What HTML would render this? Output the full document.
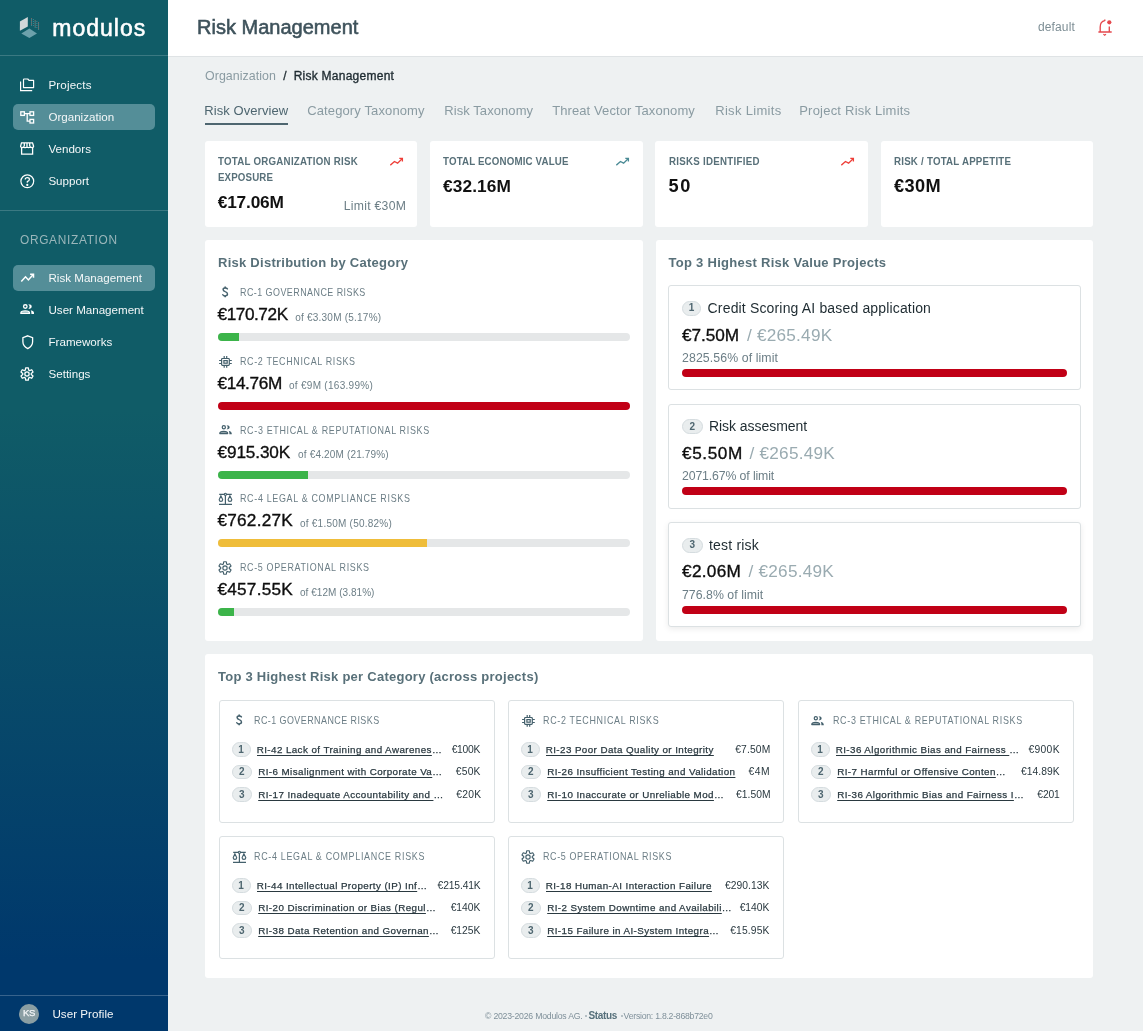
<!DOCTYPE html>
<html><head><meta charset="utf-8"><title>Risk Management</title>
<style>
html,body{margin:0;padding:0;width:1143px;height:1031px;overflow:hidden;background:#eef1f2}
body{position:relative;font-family:"Liberation Sans",sans-serif}
.t{position:absolute;white-space:nowrap}
</style></head><body>
<div style="position:absolute;left:0;top:0;width:1143px;height:1031px;will-change:transform;overflow:hidden">
<div style="position:absolute;left:0;top:0;width:168px;height:1031px;background:linear-gradient(180deg,#105c67 0px,#105c67 410px,#00386c 960px,#00386c 1031px)"></div>
<div style="position:absolute;left:0;top:55px;width:168px;height:1px;background:rgba(255,255,255,0.18)"></div>
<div style="position:absolute;left:0;top:210px;width:168px;height:1px;background:rgba(255,255,255,0.18)"></div>
<div style="position:absolute;left:0;top:995px;width:168px;height:1px;background:rgba(255,255,255,0.22)"></div>
<svg style="position:absolute;left:0;top:0" width="60" height="56" viewBox="0 0 60 56">
<polygon points="19.9,21.6 27.8,16.9 27.8,26.5 19.9,30.8" fill="#d3d8da"/>
<polygon points="21.3,33.5 29.4,28.6 37,33.5 29.4,37.9" fill="#6da1ab"/>
<circle cx="31.60" cy="18.60" r="0.5" fill="#a06e68"/>
<circle cx="31.60" cy="19.60" r="0.5" fill="#4f929b"/>
<circle cx="31.60" cy="20.60" r="0.5" fill="#a06e68"/>
<circle cx="31.60" cy="21.60" r="0.5" fill="#4f929b"/>
<circle cx="31.60" cy="22.60" r="0.5" fill="#a06e68"/>
<circle cx="31.60" cy="23.60" r="0.5" fill="#4f929b"/>
<circle cx="31.60" cy="24.60" r="0.5" fill="#a06e68"/>
<circle cx="31.60" cy="25.60" r="0.5" fill="#4f929b"/>
<circle cx="33.35" cy="19.60" r="0.5" fill="#4f929b"/>
<circle cx="33.35" cy="21.60" r="0.5" fill="#4f929b"/>
<circle cx="33.35" cy="23.60" r="0.5" fill="#4f929b"/>
<circle cx="33.35" cy="25.60" r="0.5" fill="#4f929b"/>
<circle cx="35.10" cy="20.60" r="0.5" fill="#a06e68"/>
<circle cx="35.10" cy="21.60" r="0.5" fill="#4f929b"/>
<circle cx="35.10" cy="22.60" r="0.5" fill="#a06e68"/>
<circle cx="35.10" cy="23.60" r="0.5" fill="#4f929b"/>
<circle cx="35.10" cy="24.60" r="0.5" fill="#a06e68"/>
<circle cx="35.10" cy="25.60" r="0.5" fill="#4f929b"/>
<circle cx="35.10" cy="26.60" r="0.5" fill="#a06e68"/>
<circle cx="35.10" cy="27.60" r="0.5" fill="#4f929b"/>
<circle cx="36.85" cy="21.60" r="0.5" fill="#4f929b"/>
<circle cx="36.85" cy="23.60" r="0.5" fill="#4f929b"/>
<circle cx="36.85" cy="25.60" r="0.5" fill="#4f929b"/>
<circle cx="36.85" cy="27.60" r="0.5" fill="#4f929b"/>
<circle cx="38.60" cy="22.60" r="0.5" fill="#a06e68"/>
<circle cx="38.60" cy="23.60" r="0.5" fill="#4f929b"/>
<circle cx="38.60" cy="24.60" r="0.5" fill="#a06e68"/>
<circle cx="38.60" cy="25.60" r="0.5" fill="#4f929b"/>
<circle cx="38.60" cy="26.60" r="0.5" fill="#a06e68"/>
<circle cx="38.60" cy="27.60" r="0.5" fill="#4f929b"/>
<circle cx="38.60" cy="28.60" r="0.5" fill="#a06e68"/>
<circle cx="38.60" cy="29.60" r="0.5" fill="#4f929b"/>
</svg>
<div style="position:absolute;left:13px;top:104px;width:142px;height:26px;border-radius:5px;background:#548e98"></div>
<div style="position:absolute;left:13px;top:265px;width:142px;height:26px;border-radius:5px;background:#548e98"></div>
<svg style="position:absolute;left:20px;top:77.5px" width="16" height="14" viewBox="0 0 16 14" fill="none" stroke="#ffffff" stroke-width="1.2">
<path d="M4.2 1 H7.8 L9 2.4 H13.6 V9.6 H3.5 V1.7 Q3.5 1 4.2 1 Z" stroke-linejoin="round"/><path d="M0.6 3.4 V12.6 H12.2"/></svg>
<svg style="position:absolute;left:20px;top:110.5px" width="15" height="13" viewBox="0 0 15 13" fill="none" stroke="#ffffff" stroke-width="1.3">
<rect x="0.8" y="0.8" width="3.6" height="3.6"/><rect x="10" y="0.8" width="3.6" height="3.6"/><rect x="10" y="8.4" width="3.6" height="3.6"/>
<path d="M4.4 2.6 H10 M7.2 2.6 V10.2 H10"/></svg>
<svg style="position:absolute;left:20px;top:141.7px" width="15" height="13" viewBox="0 0 15 13" fill="none" stroke="#ffffff" stroke-width="1.3">
<path d="M1.5 0.8 H12.5 L13.6 4.2 Q13.6 5.6 12 5.6 Q10.3 5.6 10.3 4.2 Q10.3 5.6 8.6 5.6 Q7 5.6 7 4.2 Q7 5.6 5.4 5.6 Q3.7 5.6 3.7 4.2 Q3.7 5.6 2.1 5.6 Q0.6 5.6 0.6 4.2 Z"/>
<path d="M1.6 5.6 V12.2 H12.6 V5.6 M4.3 1 V4.2 M7 1 V4.2 M9.7 1 V4.2"/></svg>
<svg style="position:absolute;left:20px;top:174px" width="15" height="15" viewBox="0 0 15 15" fill="none" stroke="#ffffff" stroke-width="1.2">
<circle cx="7.3" cy="7.3" r="6.4"/><path d="M5.2 5.6 Q5.2 3.6 7.3 3.6 Q9.4 3.6 9.4 5.4 Q9.4 6.6 7.3 7.6 V8.8"/><circle cx="7.3" cy="10.9" r="0.5" fill="#ffffff"/></svg>
<svg style="position:absolute;left:20px;top:273px" width="16" height="12" viewBox="0 0 16 12" fill="none" stroke="#ffffff" stroke-width="1.5" stroke-linejoin="miter" stroke-linecap="butt">
<path d="M1.3 8.4 L5.5 3.8 L8.4 7 L13.2 1.6"/><path d="M10.1 1.3 H13.5 V4.7"/></svg>
<svg style="position:absolute;left:20px;top:304px" width="15.0" height="11.0" viewBox="0 0 15 11">
<circle cx="5.3" cy="2.5" r="1.75" fill="none" stroke="#ffffff" stroke-width="1.35"/>
<path d="M8.3 0.2 A3.4 2.3 0 0 1 8.3 4.8 A4.2 3.4 0 0 0 8.3 0.2Z" fill="#ffffff"/>
<path d="M0.9 9.4 V9 Q0.9 6.9 5.2 6.9 Q9.5 6.9 9.5 9 V9.4 Z" fill="#ffffff" fill-opacity="0.55" stroke="#ffffff" stroke-width="1.35" stroke-linejoin="round"/>
<path d="M10.7 6.3 Q14 6.9 14 9 V10.1 H11.4 V9.2 Q11.4 7.5 10.7 6.3 Z" fill="#ffffff"/></svg>
<svg style="position:absolute;left:21.5px;top:334.5px" width="12" height="15" viewBox="0 0 12 15" fill="none" stroke="#ffffff" stroke-width="1.3">
<path d="M5.75 0.8 L10.6 2.6 V6.8 Q10.6 11.2 5.75 13.6 Q0.9 11.2 0.9 6.8 V2.6 Z"/></svg>
<svg style="position:absolute;left:20.3px;top:367px" width="14" height="14" viewBox="0 0 15 15" fill="none" stroke="#ffffff" stroke-width="1.39" stroke-linejoin="round">
<polygon points="6.09,0.85 8.91,0.85 9.28,3.26 10.28,3.84 12.55,2.95 13.97,5.40 12.06,6.92 12.06,8.08 13.97,9.60 12.55,12.05 10.28,11.16 9.28,11.74 8.91,14.15 6.09,14.15 5.72,11.74 4.72,11.16 2.45,12.05 1.03,9.60 2.94,8.08 2.94,6.92 1.03,5.40 2.45,2.95 4.72,3.84 5.72,3.26"/><circle cx="7.5" cy="7.5" r="2.3"/></svg>
<div style="position:absolute;left:19px;top:1004px;width:20px;height:20px;border-radius:50%;background:#8a9ea3"></div>
<div style="position:absolute;left:168px;top:0;width:975px;height:56px;background:#fff"></div>
<svg style="position:absolute;left:1097px;top:18px" width="17" height="19" viewBox="0 0 17 19" fill="none" stroke="#e5484d" stroke-width="1.35">
<path d="M1.4 14 H14.7 M3.2 14 V9 Q3.2 3.6 7.8 2.7 M12.3 8.6 V14 M7.8 1.5 V2.9"/><path d="M6.4 16.1 L7.7 17.3 L9 16.1" stroke-width="1.2"/><circle cx="12.3" cy="4.3" r="2.1" fill="#e5484d" stroke="none"/></svg>
<div style="position:absolute;left:168px;top:56px;width:975px;height:975px;background:#eef1f2"></div>
<div style="position:absolute;left:168px;top:56px;width:975px;height:1px;background:#dfe3e5"></div>
<div style="position:absolute;left:205px;top:123px;width:83px;height:2px;background:#4e6670"></div>
<div style="position:absolute;left:205px;top:141px;width:212px;height:86px;background:#fff;border-radius:3px"></div>
<div style="position:absolute;left:430px;top:141px;width:213px;height:86px;background:#fff;border-radius:3px"></div>
<div style="position:absolute;left:655px;top:141px;width:213px;height:86px;background:#fff;border-radius:3px"></div>
<div style="position:absolute;left:881px;top:141px;width:212px;height:86px;background:#fff;border-radius:3px"></div>
<svg style="position:absolute;left:390px;top:157px" width="16" height="12" viewBox="0 0 16 12" fill="none" stroke="#ee3e38" stroke-width="1.3" stroke-linejoin="miter" stroke-linecap="butt">
<path d="M0.3 8.2 L4.45 4.45 L7.6 6.1 L12.1 1.7"/><path d="M9.3 1.4 H12.4 V4.45"/></svg>
<svg style="position:absolute;left:615.5px;top:157px" width="16" height="12" viewBox="0 0 16 12" fill="none" stroke="#4a8a95" stroke-width="1.3" stroke-linejoin="miter" stroke-linecap="butt">
<path d="M0.3 8.2 L4.45 4.45 L7.6 6.1 L12.1 1.7"/><path d="M9.3 1.4 H12.4 V4.45"/></svg>
<svg style="position:absolute;left:840.5px;top:157px" width="16" height="12" viewBox="0 0 16 12" fill="none" stroke="#ee3e38" stroke-width="1.3" stroke-linejoin="miter" stroke-linecap="butt">
<path d="M0.3 8.2 L4.45 4.45 L7.6 6.1 L12.1 1.7"/><path d="M9.3 1.4 H12.4 V4.45"/></svg>
<div style="position:absolute;left:205px;top:240px;width:438px;height:401px;background:#fff;border-radius:3px"></div>
<div style="position:absolute;left:656px;top:240px;width:437px;height:401px;background:#fff;border-radius:3px"></div>
<div style="position:absolute;left:205px;top:654px;width:888px;height:324px;background:#fff;border-radius:3px"></div>
<div style="position:absolute;left:218px;top:333.0px;width:412px;height:8px;border-radius:4px;background:#e5e7e8;overflow:hidden"><div style="width:21.3px;height:8px;background:#3cb44a"></div></div>
<svg style="position:absolute;left:220.9px;top:286.4px" width="9" height="12" viewBox="0 0 9 12" fill="none" stroke="#44606c" stroke-width="1.45" stroke-linecap="round">
<path d="M6.4 2.9 Q5.9 1.9 4.1 1.9 Q2.1 1.9 2.1 3.6 Q2.1 5 4.2 5.6 Q6.5 6.2 6.5 8.1 Q6.5 9.9 4.1 9.9 Q2.4 9.9 1.8 8.7"/><path d="M4.2 0.6 V1.9 M4.2 9.9 V11.3" stroke-linecap="butt" stroke-width="1.6"/></svg>
<div style="position:absolute;left:218px;top:401.75px;width:412px;height:8px;border-radius:4px;background:#e5e7e8;overflow:hidden"><div style="width:412.0px;height:8px;background:#c10016"></div></div>
<svg style="position:absolute;left:219.0px;top:355.95px" width="13" height="12" viewBox="0 0 13 12" fill="none" stroke="#44606c" stroke-width="1.2">
<rect x="2.6" y="2.5" width="7.7" height="6.8" rx="0.8"/><rect x="4.9" y="4.6" width="3.3" height="2.6"/>
<path d="M5.2 0.1 V2.5 M7.7 0.1 V2.5 M5.2 9.3 V11.8 M7.7 9.3 V11.8 M0.1 4.5 H2.6 M0.1 7.5 H2.6 M10.3 4.5 H12.8 M10.3 7.5 H12.8"/></svg>
<div style="position:absolute;left:218px;top:470.5px;width:412px;height:8px;border-radius:4px;background:#e5e7e8;overflow:hidden"><div style="width:89.8px;height:8px;background:#3cb44a"></div></div>
<svg style="position:absolute;left:218.70000000000002px;top:425.2px" width="13.65" height="10.01" viewBox="0 0 15 11">
<circle cx="5.3" cy="2.5" r="1.75" fill="none" stroke="#44606c" stroke-width="1.35"/>
<path d="M8.3 0.2 A3.4 2.3 0 0 1 8.3 4.8 A4.2 3.4 0 0 0 8.3 0.2Z" fill="#44606c"/>
<path d="M0.9 9.4 V9 Q0.9 6.9 5.2 6.9 Q9.5 6.9 9.5 9 V9.4 Z" fill="#44606c" fill-opacity="0.55" stroke="#44606c" stroke-width="1.35" stroke-linejoin="round"/>
<path d="M10.7 6.3 Q14 6.9 14 9 V10.1 H11.4 V9.2 Q11.4 7.5 10.7 6.3 Z" fill="#44606c"/></svg>
<div style="position:absolute;left:218px;top:539.25px;width:412px;height:8px;border-radius:4px;background:#e5e7e8;overflow:hidden"><div style="width:209.4px;height:8px;background:#efbd3a"></div></div>
<svg style="position:absolute;left:218.0px;top:492.0px" width="15" height="14" viewBox="0 0 15 14" fill="none" stroke="#44606c" stroke-width="1.1">
<path d="M1.2 2.3 H6.3 M8.5 2.3 H13.8 M7.4 3.4 V12.4 M1 12.4 H14" stroke-width="1.2"/><circle cx="7.4" cy="2.3" r="1.1"/>
<path d="M2.9 3.8 L1.2 7.7 Q1.2 9.4 2.9 9.4 Q4.7 9.4 4.7 7.7 Z M11.9 3.8 L10.1 7.7 Q10.1 9.4 11.9 9.4 Q13.8 9.4 13.8 7.7 Z"/></svg>
<div style="position:absolute;left:218px;top:608.0px;width:412px;height:8px;border-radius:4px;background:#e5e7e8;overflow:hidden"><div style="width:15.7px;height:8px;background:#3cb44a"></div></div>
<svg style="position:absolute;left:218.45000000000002px;top:560.9px" width="14" height="14" viewBox="0 0 15 15" fill="none" stroke="#44606c" stroke-width="1.23" stroke-linejoin="round">
<polygon points="6.09,0.85 8.91,0.85 9.28,3.26 10.28,3.84 12.55,2.95 13.97,5.40 12.06,6.92 12.06,8.08 13.97,9.60 12.55,12.05 10.28,11.16 9.28,11.74 8.91,14.15 6.09,14.15 5.72,11.74 4.72,11.16 2.45,12.05 1.03,9.60 2.94,8.08 2.94,6.92 1.03,5.40 2.45,2.95 4.72,3.84 5.72,3.26"/><circle cx="7.5" cy="7.5" r="2.3"/></svg>
<div style="position:absolute;left:668px;top:285.3px;width:413px;height:105px;box-sizing:border-box;border:1px solid #dce1e3;border-radius:3px;background:#fff;"></div>
<div style="position:absolute;left:682px;top:301.1px;width:19px;height:14.8px;box-sizing:border-box;border:1px solid #d5dcdf;border-radius:8px;background:#e9edee"></div>
<div style="position:absolute;left:682px;top:369.0px;width:385px;height:8px;border-radius:4px;background:#c10016"></div>
<div style="position:absolute;left:668px;top:403.6px;width:413px;height:105px;box-sizing:border-box;border:1px solid #dce1e3;border-radius:3px;background:#fff;"></div>
<div style="position:absolute;left:682px;top:419.40000000000003px;width:20.6px;height:14.8px;box-sizing:border-box;border:1px solid #d5dcdf;border-radius:8px;background:#e9edee"></div>
<div style="position:absolute;left:682px;top:487.3px;width:385px;height:8px;border-radius:4px;background:#c10016"></div>
<div style="position:absolute;left:668px;top:522.1px;width:413px;height:105px;box-sizing:border-box;border:1px solid #dce1e3;border-radius:3px;background:#fff;box-shadow:0 2px 6px rgba(0,0,0,0.08);"></div>
<div style="position:absolute;left:682px;top:537.9px;width:20.6px;height:14.8px;box-sizing:border-box;border:1px solid #d5dcdf;border-radius:8px;background:#e9edee"></div>
<div style="position:absolute;left:682px;top:605.8000000000001px;width:385px;height:8px;border-radius:4px;background:#c10016"></div>
<div style="position:absolute;left:218.5px;top:699.5px;width:276px;height:123px;box-sizing:border-box;border:1px solid #dce1e3;border-radius:3px;background:#fff"></div>
<svg style="position:absolute;left:234.6px;top:714.1999999999999px" width="9" height="12" viewBox="0 0 9 12" fill="none" stroke="#44606c" stroke-width="1.45" stroke-linecap="round">
<path d="M6.4 2.9 Q5.9 1.9 4.1 1.9 Q2.1 1.9 2.1 3.6 Q2.1 5 4.2 5.6 Q6.5 6.2 6.5 8.1 Q6.5 9.9 4.1 9.9 Q2.4 9.9 1.8 8.7"/><path d="M4.2 0.6 V1.9 M4.2 9.9 V11.3" stroke-linecap="butt" stroke-width="1.6"/></svg>
<div style="position:absolute;left:231.5px;top:742.0px;width:19px;height:14.5px;box-sizing:border-box;border:1px solid #d5dcdf;border-radius:8px;background:#e9edee"></div>
<div class="lk" style="position:absolute;left:256.7px;top:743.6px;width:186.2px;height:14px;overflow:hidden;white-space:nowrap;text-overflow:ellipsis;font-size:9.8px;letter-spacing:0.42px;line-height:12px;color:#2a3940;-webkit-text-stroke:0.25px #2a3940;text-decoration:underline;text-underline-offset:1.5px">RI-42 Lack of Training and Awareness Program</div>
<div style="position:absolute;left:231.5px;top:764.5px;width:20.5px;height:14.5px;box-sizing:border-box;border:1px solid #d5dcdf;border-radius:8px;background:#e9edee"></div>
<div class="lk" style="position:absolute;left:258.2px;top:766.1px;width:184.7px;height:14px;overflow:hidden;white-space:nowrap;text-overflow:ellipsis;font-size:9.8px;letter-spacing:0.42px;line-height:12px;color:#2a3940;-webkit-text-stroke:0.25px #2a3940;text-decoration:underline;text-underline-offset:1.5px">RI-6 Misalignment with Corporate Values and Ethics</div>
<div style="position:absolute;left:231.5px;top:787.0px;width:20.5px;height:14.5px;box-sizing:border-box;border:1px solid #d5dcdf;border-radius:8px;background:#e9edee"></div>
<div class="lk" style="position:absolute;left:258.2px;top:788.6px;width:187.3px;height:14px;overflow:hidden;white-space:nowrap;text-overflow:ellipsis;font-size:9.8px;letter-spacing:0.42px;line-height:12px;color:#2a3940;-webkit-text-stroke:0.25px #2a3940;text-decoration:underline;text-underline-offset:1.5px">RI-17 Inadequate Accountability and Oversight</div>
<div style="position:absolute;left:507.5px;top:699.5px;width:276px;height:123px;box-sizing:border-box;border:1px solid #dce1e3;border-radius:3px;background:#fff"></div>
<svg style="position:absolute;left:521.7px;top:715.0px" width="13" height="12" viewBox="0 0 13 12" fill="none" stroke="#44606c" stroke-width="1.2">
<rect x="2.6" y="2.5" width="7.7" height="6.8" rx="0.8"/><rect x="4.9" y="4.6" width="3.3" height="2.6"/>
<path d="M5.2 0.1 V2.5 M7.7 0.1 V2.5 M5.2 9.3 V11.8 M7.7 9.3 V11.8 M0.1 4.5 H2.6 M0.1 7.5 H2.6 M10.3 4.5 H12.8 M10.3 7.5 H12.8"/></svg>
<div style="position:absolute;left:520.5px;top:742.0px;width:19px;height:14.5px;box-sizing:border-box;border:1px solid #d5dcdf;border-radius:8px;background:#e9edee"></div>
<div class="lk" style="position:absolute;left:545.7px;top:743.6px;width:172px;height:14px;overflow:hidden;white-space:nowrap;text-overflow:ellipsis;font-size:9.8px;letter-spacing:0.42px;line-height:12px;color:#2a3940;-webkit-text-stroke:0.25px #2a3940;text-decoration:underline;text-underline-offset:1.5px">RI-23 Poor Data Quality or Integrity</div>
<div style="position:absolute;left:520.5px;top:764.5px;width:20.5px;height:14.5px;box-sizing:border-box;border:1px solid #d5dcdf;border-radius:8px;background:#e9edee"></div>
<div class="lk" style="position:absolute;left:547.2px;top:766.1px;width:195px;height:14px;overflow:hidden;white-space:nowrap;text-overflow:ellipsis;font-size:9.8px;letter-spacing:0.42px;line-height:12px;color:#2a3940;-webkit-text-stroke:0.25px #2a3940;text-decoration:underline;text-underline-offset:1.5px">RI-26 Insufficient Testing and Validation</div>
<div style="position:absolute;left:520.5px;top:787.0px;width:20.5px;height:14.5px;box-sizing:border-box;border:1px solid #d5dcdf;border-radius:8px;background:#e9edee"></div>
<div class="lk" style="position:absolute;left:547.2px;top:788.6px;width:179.9px;height:14px;overflow:hidden;white-space:nowrap;text-overflow:ellipsis;font-size:9.8px;letter-spacing:0.42px;line-height:12px;color:#2a3940;-webkit-text-stroke:0.25px #2a3940;text-decoration:underline;text-underline-offset:1.5px">RI-10 Inaccurate or Unreliable Model Outputs</div>
<div style="position:absolute;left:797.5px;top:699.5px;width:276px;height:123px;box-sizing:border-box;border:1px solid #dce1e3;border-radius:3px;background:#fff"></div>
<svg style="position:absolute;left:811.4px;top:715.5px" width="13.65" height="10.01" viewBox="0 0 15 11">
<circle cx="5.3" cy="2.5" r="1.75" fill="none" stroke="#44606c" stroke-width="1.35"/>
<path d="M8.3 0.2 A3.4 2.3 0 0 1 8.3 4.8 A4.2 3.4 0 0 0 8.3 0.2Z" fill="#44606c"/>
<path d="M0.9 9.4 V9 Q0.9 6.9 5.2 6.9 Q9.5 6.9 9.5 9 V9.4 Z" fill="#44606c" fill-opacity="0.55" stroke="#44606c" stroke-width="1.35" stroke-linejoin="round"/>
<path d="M10.7 6.3 Q14 6.9 14 9 V10.1 H11.4 V9.2 Q11.4 7.5 10.7 6.3 Z" fill="#44606c"/></svg>
<div style="position:absolute;left:810.5px;top:742.0px;width:19px;height:14.5px;box-sizing:border-box;border:1px solid #d5dcdf;border-radius:8px;background:#e9edee"></div>
<div class="lk" style="position:absolute;left:835.7px;top:743.6px;width:184.2px;height:14px;overflow:hidden;white-space:nowrap;text-overflow:ellipsis;font-size:9.8px;letter-spacing:0.42px;line-height:12px;color:#2a3940;-webkit-text-stroke:0.25px #2a3940;text-decoration:underline;text-underline-offset:1.5px">RI-36 Algorithmic Bias and Fairness Issues</div>
<div style="position:absolute;left:810.5px;top:764.5px;width:20.5px;height:14.5px;box-sizing:border-box;border:1px solid #d5dcdf;border-radius:8px;background:#e9edee"></div>
<div class="lk" style="position:absolute;left:837.2px;top:766.1px;width:171.1px;height:14px;overflow:hidden;white-space:nowrap;text-overflow:ellipsis;font-size:9.8px;letter-spacing:0.42px;line-height:12px;color:#2a3940;-webkit-text-stroke:0.25px #2a3940;text-decoration:underline;text-underline-offset:1.5px">RI-7 Harmful or Offensive Content Generation</div>
<div style="position:absolute;left:810.5px;top:787.0px;width:20.5px;height:14.5px;box-sizing:border-box;border:1px solid #d5dcdf;border-radius:8px;background:#e9edee"></div>
<div class="lk" style="position:absolute;left:837.2px;top:788.6px;width:188.3px;height:14px;overflow:hidden;white-space:nowrap;text-overflow:ellipsis;font-size:9.8px;letter-spacing:0.42px;line-height:12px;color:#2a3940;-webkit-text-stroke:0.25px #2a3940;text-decoration:underline;text-underline-offset:1.5px">RI-36 Algorithmic Bias and Fairness Issues</div>
<div style="position:absolute;left:218.5px;top:835.7px;width:276px;height:123px;box-sizing:border-box;border:1px solid #dce1e3;border-radius:3px;background:#fff"></div>
<svg style="position:absolute;left:231.7px;top:849.75px" width="15" height="14" viewBox="0 0 15 14" fill="none" stroke="#44606c" stroke-width="1.1">
<path d="M1.2 2.3 H6.3 M8.5 2.3 H13.8 M7.4 3.4 V12.4 M1 12.4 H14" stroke-width="1.2"/><circle cx="7.4" cy="2.3" r="1.1"/>
<path d="M2.9 3.8 L1.2 7.7 Q1.2 9.4 2.9 9.4 Q4.7 9.4 4.7 7.7 Z M11.9 3.8 L10.1 7.7 Q10.1 9.4 11.9 9.4 Q13.8 9.4 13.8 7.7 Z"/></svg>
<div style="position:absolute;left:231.5px;top:878.2px;width:19px;height:14.5px;box-sizing:border-box;border:1px solid #d5dcdf;border-radius:8px;background:#e9edee"></div>
<div class="lk" style="position:absolute;left:256.7px;top:879.8000000000001px;width:172.7px;height:14px;overflow:hidden;white-space:nowrap;text-overflow:ellipsis;font-size:9.8px;letter-spacing:0.42px;line-height:12px;color:#2a3940;-webkit-text-stroke:0.25px #2a3940;text-decoration:underline;text-underline-offset:1.5px">RI-44 Intellectual Property (IP) Infringement</div>
<div style="position:absolute;left:231.5px;top:900.7px;width:20.5px;height:14.5px;box-sizing:border-box;border:1px solid #d5dcdf;border-radius:8px;background:#e9edee"></div>
<div class="lk" style="position:absolute;left:258.2px;top:902.3000000000001px;width:182.7px;height:14px;overflow:hidden;white-space:nowrap;text-overflow:ellipsis;font-size:9.8px;letter-spacing:0.42px;line-height:12px;color:#2a3940;-webkit-text-stroke:0.25px #2a3940;text-decoration:underline;text-underline-offset:1.5px">RI-20 Discrimination or Bias (Regulatory)</div>
<div style="position:absolute;left:231.5px;top:923.2px;width:20.5px;height:14.5px;box-sizing:border-box;border:1px solid #d5dcdf;border-radius:8px;background:#e9edee"></div>
<div class="lk" style="position:absolute;left:258.2px;top:924.8000000000001px;width:180.6px;height:14px;overflow:hidden;white-space:nowrap;text-overflow:ellipsis;font-size:9.8px;letter-spacing:0.42px;line-height:12px;color:#2a3940;-webkit-text-stroke:0.25px #2a3940;text-decoration:underline;text-underline-offset:1.5px">RI-38 Data Retention and Governance</div>
<div style="position:absolute;left:507.5px;top:835.7px;width:276px;height:123px;box-sizing:border-box;border:1px solid #dce1e3;border-radius:3px;background:#fff"></div>
<svg style="position:absolute;left:521.15px;top:849.9px" width="14" height="14" viewBox="0 0 15 15" fill="none" stroke="#44606c" stroke-width="1.23" stroke-linejoin="round">
<polygon points="6.09,0.85 8.91,0.85 9.28,3.26 10.28,3.84 12.55,2.95 13.97,5.40 12.06,6.92 12.06,8.08 13.97,9.60 12.55,12.05 10.28,11.16 9.28,11.74 8.91,14.15 6.09,14.15 5.72,11.74 4.72,11.16 2.45,12.05 1.03,9.60 2.94,8.08 2.94,6.92 1.03,5.40 2.45,2.95 4.72,3.84 5.72,3.26"/><circle cx="7.5" cy="7.5" r="2.3"/></svg>
<div style="position:absolute;left:520.5px;top:878.2px;width:19px;height:14.5px;box-sizing:border-box;border:1px solid #d5dcdf;border-radius:8px;background:#e9edee"></div>
<div class="lk" style="position:absolute;left:545.7px;top:879.8000000000001px;width:168px;height:14px;overflow:hidden;white-space:nowrap;text-overflow:ellipsis;font-size:9.8px;letter-spacing:0.42px;line-height:12px;color:#2a3940;-webkit-text-stroke:0.25px #2a3940;text-decoration:underline;text-underline-offset:1.5px">RI-18 Human-AI Interaction Failure</div>
<div style="position:absolute;left:520.5px;top:900.7px;width:20.5px;height:14.5px;box-sizing:border-box;border:1px solid #d5dcdf;border-radius:8px;background:#e9edee"></div>
<div class="lk" style="position:absolute;left:547.2px;top:902.3000000000001px;width:185.9px;height:14px;overflow:hidden;white-space:nowrap;text-overflow:ellipsis;font-size:9.8px;letter-spacing:0.42px;line-height:12px;color:#2a3940;-webkit-text-stroke:0.25px #2a3940;text-decoration:underline;text-underline-offset:1.5px">RI-2 System Downtime and Availability Issues</div>
<div style="position:absolute;left:520.5px;top:923.2px;width:20.5px;height:14.5px;box-sizing:border-box;border:1px solid #d5dcdf;border-radius:8px;background:#e9edee"></div>
<div class="lk" style="position:absolute;left:547.2px;top:924.8000000000001px;width:173.3px;height:14px;overflow:hidden;white-space:nowrap;text-overflow:ellipsis;font-size:9.8px;letter-spacing:0.42px;line-height:12px;color:#2a3940;-webkit-text-stroke:0.25px #2a3940;text-decoration:underline;text-underline-offset:1.5px">RI-15 Failure in AI-System Integration</div>
<div style="position:absolute;left:585px;top:1015px;width:2px;height:2px;background:#b5c0c5"></div>
<div style="position:absolute;left:620.5px;top:1015px;width:2px;height:2px;background:#b5c0c5"></div>
<div class="t" id="t0" style="left:52.30px;top:14.70px;font-size:23px;line-height:26px;font-weight:400;color:#ffffff;letter-spacing:1.000px;-webkit-text-stroke:0.55px #ffffff">modulos</div>
<div class="t" id="t1" style="left:48.40px;top:78.00px;font-size:11.6px;line-height:13px;font-weight:400;color:#f4f7f8;letter-spacing:0.165px;">Projects</div>
<div class="t" id="t2" style="left:48.40px;top:110.00px;font-size:11.6px;line-height:13px;font-weight:400;color:#f4f7f8;letter-spacing:0.000px;">Organization</div>
<div class="t" id="t3" style="left:48.40px;top:142.00px;font-size:11.6px;line-height:13px;font-weight:400;color:#f4f7f8;letter-spacing:0.000px;">Vendors</div>
<div class="t" id="t4" style="left:48.40px;top:174.00px;font-size:11.6px;line-height:13px;font-weight:400;color:#f4f7f8;letter-spacing:0.000px;">Support</div>
<div class="t" id="t5" style="left:20.00px;top:232.00px;font-size:13.2px;line-height:15px;font-weight:400;color:#9ab6ba;letter-spacing:0.770px;transform:scaleX(0.9);transform-origin:0 0">ORGANIZATION</div>
<div class="t" id="t6" style="left:48.50px;top:271.00px;font-size:11.6px;line-height:13px;font-weight:400;color:#f4f7f8;letter-spacing:-0.000px;">Risk Management</div>
<div class="t" id="t7" style="left:48.50px;top:303.00px;font-size:11.6px;line-height:13px;font-weight:400;color:#f4f7f8;letter-spacing:-0.010px;">User Management</div>
<div class="t" id="t8" style="left:48.50px;top:335.00px;font-size:11.6px;line-height:13px;font-weight:400;color:#f4f7f8;letter-spacing:0.000px;">Frameworks</div>
<div class="t" id="t9" style="left:48.50px;top:367.00px;font-size:11.6px;line-height:13px;font-weight:400;color:#f4f7f8;letter-spacing:0.000px;">Settings</div>
<div class="t" id="t10" style="left:23.00px;top:1007.00px;font-size:9.5px;line-height:11px;font-weight:400;color:#f4f6f7;letter-spacing:-0.400px;-webkit-text-stroke:0.25px #f4f6f7">KS</div>
<div class="t" id="t11" style="left:52.40px;top:1006.70px;font-size:11.6px;line-height:13px;font-weight:400;color:#f4f7f8;letter-spacing:0.048px;">User Profile</div>
<div class="t" id="t12" style="left:197.00px;top:15.60px;font-size:20px;line-height:22px;font-weight:400;color:#3e525b;letter-spacing:0.010px;-webkit-text-stroke:0.55px #3e525b">Risk Management</div>
<div class="t" id="t13" style="left:1038.00px;top:19.80px;font-size:12px;line-height:14px;font-weight:400;color:#7d8e95;letter-spacing:0.127px;">default</div>
<div class="t" id="t14" style="left:205.00px;top:69.00px;font-size:12.4px;line-height:14px;font-weight:400;color:#8a9ba2;letter-spacing:0.064px;">Organization</div>
<div class="t" id="t15" style="left:283.30px;top:69.00px;font-size:12px;line-height:14px;font-weight:400;color:#1e2b31;letter-spacing:0.000px;-webkit-text-stroke:0.3px #1e2b31">/</div>
<div class="t" id="t16" style="left:293.70px;top:69.00px;font-size:12px;line-height:14px;font-weight:400;color:#1e2b31;letter-spacing:0.249px;-webkit-text-stroke:0.35px #1e2b31">Risk Management</div>
<div class="t" id="t17" style="left:204.20px;top:103.00px;font-size:13px;line-height:15px;font-weight:400;color:#4e6670;letter-spacing:0.083px;">Risk Overview</div>
<div class="t" id="t18" style="left:307.20px;top:103.00px;font-size:13px;line-height:15px;font-weight:400;color:#8a9ba2;letter-spacing:0.124px;">Category Taxonomy</div>
<div class="t" id="t19" style="left:444.20px;top:103.00px;font-size:13px;line-height:15px;font-weight:400;color:#8a9ba2;letter-spacing:0.083px;">Risk Taxonomy</div>
<div class="t" id="t20" style="left:552.20px;top:103.00px;font-size:13px;line-height:15px;font-weight:400;color:#8a9ba2;letter-spacing:0.095px;">Threat Vector Taxonomy</div>
<div class="t" id="t21" style="left:715.20px;top:103.00px;font-size:13px;line-height:15px;font-weight:400;color:#8a9ba2;letter-spacing:0.320px;">Risk Limits</div>
<div class="t" id="t22" style="left:799.20px;top:103.00px;font-size:13px;line-height:15px;font-weight:400;color:#8a9ba2;letter-spacing:0.222px;">Project Risk Limits</div>
<div class="t" id="t23" style="left:217.70px;top:155.40px;font-size:10.8px;line-height:12px;font-weight:700;color:#587079;letter-spacing:0.273px;transform:scaleX(0.9);transform-origin:0 0">TOTAL ORGANIZATION RISK</div>
<div class="t" id="t24" style="left:217.70px;top:171.20px;font-size:10.8px;line-height:12px;font-weight:700;color:#587079;letter-spacing:0.143px;transform:scaleX(0.9);transform-origin:0 0">EXPOSURE</div>
<div class="t" id="t25" style="left:217.70px;top:191.90px;font-size:17.3px;line-height:20px;font-weight:700;color:#111;letter-spacing:-0.167px;">€17.06M</div>
<div class="t" id="t26" style="left:343.70px;top:199.00px;font-size:12.2px;line-height:14px;font-weight:400;color:#6c7e86;letter-spacing:0.283px;">Limit €30M</div>
<div class="t" id="t27" style="left:443.00px;top:155.40px;font-size:10.8px;line-height:12px;font-weight:700;color:#587079;letter-spacing:0.177px;transform:scaleX(0.9);transform-origin:0 0">TOTAL ECONOMIC VALUE</div>
<div class="t" id="t28" style="left:443.00px;top:175.70px;font-size:17.3px;line-height:20px;font-weight:700;color:#111;letter-spacing:0.098px;">€32.16M</div>
<div class="t" id="t29" style="left:668.50px;top:155.40px;font-size:10.8px;line-height:12px;font-weight:700;color:#587079;letter-spacing:0.305px;transform:scaleX(0.9);transform-origin:0 0">RISKS IDENTIFIED</div>
<div class="t" id="t30" style="left:668.50px;top:175.70px;font-size:18.2px;line-height:20px;font-weight:700;color:#111;letter-spacing:1.600px;">50</div>
<div class="t" id="t31" style="left:893.90px;top:155.40px;font-size:10.8px;line-height:12px;font-weight:700;color:#587079;letter-spacing:0.250px;transform:scaleX(0.9);transform-origin:0 0">RISK / TOTAL APPETITE</div>
<div class="t" id="t32" style="left:893.90px;top:175.70px;font-size:18.2px;line-height:20px;font-weight:700;color:#111;letter-spacing:0.404px;">€30M</div>
<div class="t" id="t33" style="left:218.00px;top:255.20px;font-size:13px;line-height:15px;font-weight:700;color:#587079;letter-spacing:0.260px;">Risk Distribution by Category</div>
<div class="t" id="t34" style="left:668.50px;top:255.20px;font-size:13px;line-height:15px;font-weight:700;color:#587079;letter-spacing:0.281px;">Top 3 Highest Risk Value Projects</div>
<div class="t" id="t35" style="left:218.00px;top:669.10px;font-size:13px;line-height:15px;font-weight:700;color:#587079;letter-spacing:0.250px;">Top 3 Highest Risk per Category (across projects)</div>
<div class="t" id="t36" style="left:240.30px;top:287.00px;font-size:10.4px;line-height:11px;font-weight:400;color:#6c7e86;letter-spacing:0.530px;transform:scaleX(0.86);transform-origin:0 0">RC-1 GOVERNANCE RISKS</div>
<div class="t" id="t37" style="left:217.50px;top:304.10px;font-size:17.2px;line-height:20px;font-weight:400;color:#0e0e0e;letter-spacing:-0.429px;-webkit-text-stroke:0.35px #0e0e0e">€170.72K</div>
<div class="t" id="t38" style="left:295.20px;top:311.60px;font-size:10px;line-height:11px;font-weight:400;color:#6c7e86;letter-spacing:0.227px;">of €3.30M (5.17%)</div>
<div class="t" id="t39" style="left:240.30px;top:355.75px;font-size:10.4px;line-height:11px;font-weight:400;color:#6c7e86;letter-spacing:0.752px;transform:scaleX(0.86);transform-origin:0 0">RC-2 TECHNICAL RISKS</div>
<div class="t" id="t40" style="left:217.50px;top:372.85px;font-size:17.2px;line-height:20px;font-weight:400;color:#0e0e0e;letter-spacing:-0.363px;-webkit-text-stroke:0.35px #0e0e0e">€14.76M</div>
<div class="t" id="t41" style="left:289.00px;top:380.35px;font-size:10px;line-height:11px;font-weight:400;color:#6c7e86;letter-spacing:0.286px;">of €9M (163.99%)</div>
<div class="t" id="t42" style="left:240.30px;top:424.50px;font-size:10.4px;line-height:11px;font-weight:400;color:#6c7e86;letter-spacing:0.773px;transform:scaleX(0.86);transform-origin:0 0">RC-3 ETHICAL & REPUTATIONAL RISKS</div>
<div class="t" id="t43" style="left:217.50px;top:441.60px;font-size:17.2px;line-height:20px;font-weight:400;color:#0e0e0e;letter-spacing:-0.121px;-webkit-text-stroke:0.35px #0e0e0e">€915.30K</div>
<div class="t" id="t44" style="left:298.10px;top:449.10px;font-size:10px;line-height:11px;font-weight:400;color:#6c7e86;letter-spacing:0.159px;">of €4.20M (21.79%)</div>
<div class="t" id="t45" style="left:240.30px;top:493.25px;font-size:10.4px;line-height:11px;font-weight:400;color:#6c7e86;letter-spacing:0.778px;transform:scaleX(0.86);transform-origin:0 0">RC-4 LEGAL & COMPLIANCE RISKS</div>
<div class="t" id="t46" style="left:217.50px;top:510.35px;font-size:17.2px;line-height:20px;font-weight:400;color:#0e0e0e;letter-spacing:0.231px;-webkit-text-stroke:0.35px #0e0e0e">€762.27K</div>
<div class="t" id="t47" style="left:300.00px;top:517.85px;font-size:10px;line-height:11px;font-weight:400;color:#6c7e86;letter-spacing:0.235px;">of €1.50M (50.82%)</div>
<div class="t" id="t48" style="left:240.30px;top:562.00px;font-size:10.4px;line-height:11px;font-weight:400;color:#6c7e86;letter-spacing:0.762px;transform:scaleX(0.86);transform-origin:0 0">RC-5 OPERATIONAL RISKS</div>
<div class="t" id="t49" style="left:217.50px;top:579.10px;font-size:17.2px;line-height:20px;font-weight:400;color:#0e0e0e;letter-spacing:0.231px;-webkit-text-stroke:0.35px #0e0e0e">€457.55K</div>
<div class="t" id="t50" style="left:300.00px;top:586.60px;font-size:10px;line-height:11px;font-weight:400;color:#6c7e86;letter-spacing:0.036px;">of €12M (3.81%)</div>
<div class="t" id="t51" style="left:688.70px;top:302.30px;font-size:10px;line-height:11px;font-weight:700;color:#4e6670;letter-spacing:0.000px;">1</div>
<div class="t" id="t52" style="left:707.60px;top:300.10px;font-size:14px;line-height:16px;font-weight:400;color:#1e2b31;letter-spacing:0.159px;">Credit Scoring AI based application</div>
<div class="t" id="t53" style="left:682.00px;top:324.50px;font-size:17.2px;line-height:20px;font-weight:400;color:#0e0e0e;letter-spacing:-0.040px;-webkit-text-stroke:0.35px #0e0e0e">€7.50M</div>
<div class="t" id="t54" style="left:747.00px;top:324.50px;font-size:17.2px;line-height:20px;font-weight:400;color:#9aabb1;letter-spacing:0.222px;">/ €265.49K</div>
<div class="t" id="t55" style="left:682.00px;top:350.90px;font-size:12.3px;line-height:14px;font-weight:400;color:#6c7e86;letter-spacing:0.102px;">2825.56% of limit</div>
<div class="t" id="t56" style="left:689.50px;top:420.60px;font-size:10px;line-height:11px;font-weight:700;color:#4e6670;letter-spacing:0.000px;">2</div>
<div class="t" id="t57" style="left:709.00px;top:418.40px;font-size:14px;line-height:16px;font-weight:400;color:#1e2b31;letter-spacing:-0.055px;">Risk assesment</div>
<div class="t" id="t58" style="left:682.00px;top:442.80px;font-size:17.2px;line-height:20px;font-weight:400;color:#0e0e0e;letter-spacing:0.600px;-webkit-text-stroke:0.35px #0e0e0e">€5.50M</div>
<div class="t" id="t59" style="left:749.40px;top:442.80px;font-size:17.2px;line-height:20px;font-weight:400;color:#9aabb1;letter-spacing:0.253px;">/ €265.49K</div>
<div class="t" id="t60" style="left:682.00px;top:469.20px;font-size:12.3px;line-height:14px;font-weight:400;color:#6c7e86;letter-spacing:-0.133px;">2071.67% of limit</div>
<div class="t" id="t61" style="left:689.50px;top:539.10px;font-size:10px;line-height:11px;font-weight:700;color:#4e6670;letter-spacing:0.000px;">3</div>
<div class="t" id="t62" style="left:709.00px;top:536.90px;font-size:14px;line-height:16px;font-weight:400;color:#1e2b31;letter-spacing:0.189px;">test risk</div>
<div class="t" id="t63" style="left:682.00px;top:561.30px;font-size:17.2px;line-height:20px;font-weight:400;color:#0e0e0e;letter-spacing:0.320px;-webkit-text-stroke:0.35px #0e0e0e">€2.06M</div>
<div class="t" id="t64" style="left:748.40px;top:561.30px;font-size:17.2px;line-height:20px;font-weight:400;color:#9aabb1;letter-spacing:0.253px;">/ €265.49K</div>
<div class="t" id="t65" style="left:682.00px;top:587.70px;font-size:12.3px;line-height:14px;font-weight:400;color:#6c7e86;letter-spacing:0.036px;">776.8% of limit</div>
<div class="t" id="t66" style="left:254.00px;top:714.80px;font-size:10.4px;line-height:11px;font-weight:400;color:#6c7e86;letter-spacing:0.520px;transform:scaleX(0.86);transform-origin:0 0">RC-1 GOVERNANCE RISKS</div>
<div class="t" id="t67" style="left:238.20px;top:743.50px;font-size:10px;line-height:11px;font-weight:700;color:#4e6670;letter-spacing:0.000px;">1</div>
<div class="t" id="t68" style="left:451.70px;top:743.50px;font-size:10.3px;line-height:11px;font-weight:400;color:#2a3940;letter-spacing:-0.300px;">€100K</div>
<div class="t" id="t69" style="left:238.95px;top:766.00px;font-size:10px;line-height:11px;font-weight:700;color:#4e6670;letter-spacing:0.000px;">2</div>
<div class="t" id="t70" style="left:455.80px;top:766.00px;font-size:10.3px;line-height:11px;font-weight:400;color:#2a3940;letter-spacing:0.196px;">€50K</div>
<div class="t" id="t71" style="left:238.95px;top:788.50px;font-size:10px;line-height:11px;font-weight:700;color:#4e6670;letter-spacing:0.000px;">3</div>
<div class="t" id="t72" style="left:456.20px;top:788.50px;font-size:10.3px;line-height:11px;font-weight:400;color:#2a3940;letter-spacing:0.262px;">€20K</div>
<div class="t" id="t73" style="left:543.00px;top:714.80px;font-size:10.4px;line-height:11px;font-weight:400;color:#6c7e86;letter-spacing:0.790px;transform:scaleX(0.86);transform-origin:0 0">RC-2 TECHNICAL RISKS</div>
<div class="t" id="t74" style="left:527.20px;top:743.50px;font-size:10px;line-height:11px;font-weight:700;color:#4e6670;letter-spacing:0.000px;">1</div>
<div class="t" id="t75" style="left:735.20px;top:743.50px;font-size:10.3px;line-height:11px;font-weight:400;color:#2a3940;letter-spacing:0.160px;">€7.50M</div>
<div class="t" id="t76" style="left:527.95px;top:766.00px;font-size:10px;line-height:11px;font-weight:700;color:#4e6670;letter-spacing:0.000px;">2</div>
<div class="t" id="t77" style="left:748.60px;top:766.00px;font-size:10.3px;line-height:11px;font-weight:400;color:#2a3940;letter-spacing:0.500px;">€4M</div>
<div class="t" id="t78" style="left:527.95px;top:788.50px;font-size:10px;line-height:11px;font-weight:700;color:#4e6670;letter-spacing:0.000px;">3</div>
<div class="t" id="t79" style="left:736.00px;top:788.50px;font-size:10.3px;line-height:11px;font-weight:400;color:#2a3940;letter-spacing:0.040px;">€1.50M</div>
<div class="t" id="t80" style="left:833.00px;top:714.80px;font-size:10.4px;line-height:11px;font-weight:400;color:#6c7e86;letter-spacing:0.773px;transform:scaleX(0.86);transform-origin:0 0">RC-3 ETHICAL & REPUTATIONAL RISKS</div>
<div class="t" id="t81" style="left:817.20px;top:743.50px;font-size:10px;line-height:11px;font-weight:700;color:#4e6670;letter-spacing:0.000px;">1</div>
<div class="t" id="t82" style="left:1028.40px;top:743.50px;font-size:10.3px;line-height:11px;font-weight:400;color:#2a3940;letter-spacing:0.350px;">€900K</div>
<div class="t" id="t83" style="left:817.95px;top:766.00px;font-size:10px;line-height:11px;font-weight:700;color:#4e6670;letter-spacing:0.000px;">2</div>
<div class="t" id="t84" style="left:1021.00px;top:766.00px;font-size:10.3px;line-height:11px;font-weight:400;color:#2a3940;letter-spacing:0.029px;">€14.89K</div>
<div class="t" id="t85" style="left:817.95px;top:788.50px;font-size:10px;line-height:11px;font-weight:700;color:#4e6670;letter-spacing:0.000px;">3</div>
<div class="t" id="t86" style="left:1037.30px;top:788.50px;font-size:10.3px;line-height:11px;font-weight:400;color:#2a3940;letter-spacing:-0.131px;">€201</div>
<div class="t" id="t87" style="left:254.00px;top:851.00px;font-size:10.4px;line-height:11px;font-weight:400;color:#6c7e86;letter-spacing:0.801px;transform:scaleX(0.86);transform-origin:0 0">RC-4 LEGAL & COMPLIANCE RISKS</div>
<div class="t" id="t88" style="left:238.20px;top:879.70px;font-size:10px;line-height:11px;font-weight:700;color:#4e6670;letter-spacing:0.000px;">1</div>
<div class="t" id="t89" style="left:437.60px;top:879.70px;font-size:10.3px;line-height:11px;font-weight:400;color:#2a3940;letter-spacing:-0.143px;">€215.41K</div>
<div class="t" id="t90" style="left:238.95px;top:902.20px;font-size:10px;line-height:11px;font-weight:700;color:#4e6670;letter-spacing:0.000px;">2</div>
<div class="t" id="t91" style="left:450.70px;top:902.20px;font-size:10.3px;line-height:11px;font-weight:400;color:#2a3940;letter-spacing:-0.050px;">€140K</div>
<div class="t" id="t92" style="left:238.95px;top:924.70px;font-size:10px;line-height:11px;font-weight:700;color:#4e6670;letter-spacing:0.000px;">3</div>
<div class="t" id="t93" style="left:450.70px;top:924.70px;font-size:10.3px;line-height:11px;font-weight:400;color:#2a3940;letter-spacing:-0.050px;">€125K</div>
<div class="t" id="t94" style="left:543.00px;top:851.00px;font-size:10.4px;line-height:11px;font-weight:400;color:#6c7e86;letter-spacing:0.728px;transform:scaleX(0.86);transform-origin:0 0">RC-5 OPERATIONAL RISKS</div>
<div class="t" id="t95" style="left:527.20px;top:879.70px;font-size:10px;line-height:11px;font-weight:700;color:#4e6670;letter-spacing:0.000px;">1</div>
<div class="t" id="t96" style="left:725.00px;top:879.70px;font-size:10.3px;line-height:11px;font-weight:400;color:#2a3940;letter-spacing:0.033px;">€290.13K</div>
<div class="t" id="t97" style="left:527.95px;top:902.20px;font-size:10px;line-height:11px;font-weight:700;color:#4e6670;letter-spacing:0.000px;">2</div>
<div class="t" id="t98" style="left:739.70px;top:902.20px;font-size:10.3px;line-height:11px;font-weight:400;color:#2a3940;letter-spacing:-0.050px;">€140K</div>
<div class="t" id="t99" style="left:527.95px;top:924.70px;font-size:10px;line-height:11px;font-weight:700;color:#4e6670;letter-spacing:0.000px;">3</div>
<div class="t" id="t100" style="left:730.20px;top:924.70px;font-size:10.3px;line-height:11px;font-weight:400;color:#2a3940;letter-spacing:0.137px;">€15.95K</div>
<div class="t" id="t101" style="left:485.00px;top:1010.80px;font-size:8.7px;line-height:10px;font-weight:400;color:#7f909a;letter-spacing:-0.218px;">© 2023-2026 Modulos AG.</div>
<div class="t" id="t102" style="left:588.50px;top:1009.80px;font-size:10px;line-height:11px;font-weight:700;color:#56707b;letter-spacing:-0.360px;">Status</div>
<div class="t" id="t103" style="left:623.60px;top:1010.80px;font-size:8.7px;line-height:10px;font-weight:400;color:#7f909a;letter-spacing:-0.251px;">Version: 1.8.2-868b72e0</div>
</div>
</body></html>
